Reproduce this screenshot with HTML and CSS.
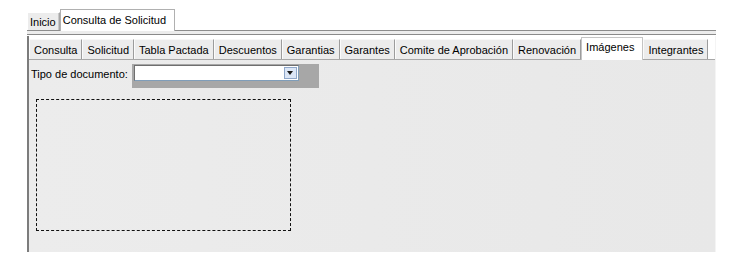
FILE: index.html
```html
<!DOCTYPE html>
<html lang="es">
<head>
    <meta charset="UTF-8">
    <title>Consulta de Solicitud</title>
    <link rel="stylesheet" href="styles.css">
</head>
<body>
    <div class="frame">
        <div class="top-tabs">
            <div class="tab">Inicio</div>
            <div class="tab active">Consulta de Solicitud</div>
        </div>
        <div class="top-rule"></div>

        <div class="panel">
            <div class="sub-tabs">
                <div class="tab">Consulta</div>
                <div class="tab">Solicitud</div>
                <div class="tab">Tabla Pactada</div>
                <div class="tab">Descuentos</div>
                <div class="tab">Garantias</div>
                <div class="tab">Garantes</div>
                <div class="tab">Comite de Aprobación</div>
                <div class="tab">Renovación</div>
                <div class="tab active">Imágenes</div>
                <div class="tab">Integrantes</div>
            </div>

            <div class="content">
                <div class="field-row">
                    <label>Tipo de documento:</label>
                    <div class="combo-wrap">
                        <div class="combo">
                            <span class="combo-btn"><span class="arrow"></span></span>
                        </div>
                    </div>
                </div>
                <div class="image-box"></div>
            </div>
        </div>
    </div>
</body>
</html>
```

FILE: styles.css
```css
body {
    margin: 0;
    background: #ffffff;
    font-family: "Liberation Sans", Arial, sans-serif;
    font-size: 11px;
    color: #000;
}
.frame {
    margin: 0 33px 0 27px;
    padding-top: 9px;
}

/* top tabs */
.top-tabs {
    display: flex;
    align-items: flex-end;
    height: 21px;
    border-bottom: 1px solid #8c8c8c;
}
.top-tabs .tab {
    height: 17px;
    line-height: 18px;
    padding: 0 3px 0 2px;
    background: #ececec;
    border: 1px solid #a5a5a5;
    border-bottom: none;
    border-top-color: #ffffff;
    border-left-color: #ffffff;
    box-shadow: inset -1px 0 #c8c8c8;
}
.top-tabs .tab.active {
    height: 21px;
    width: 108px;
    margin-bottom: -1px;
    background: #ffffff;
    line-height: 20px;
    border: 1px solid #b0b0b0;
    border-bottom: none;
    box-shadow: none;
}
.top-rule {
    height: 3px;
    background: #ececec;
    border-bottom: 1px solid #8a8a8a;
}

/* inner panel */
.panel {
    border-left: 2px solid #7c7c7c;
    border-right: 1px solid #f4f4f4;
    background: #e9e9e9;
    margin-top: 1px;
}
.sub-tabs {
    display: flex;
    align-items: flex-end;
    height: 23px;
    background: #ffffff;
    border-bottom: 1px solid #a8a8a8;
}
.sub-tabs .tab {
    height: 19px;
    line-height: 20px;
    padding: 0 4px;
    background: #ececec;
    border: 1px solid #9c9c9c;
    border-bottom: none;
    border-top-color: #f8f8f8;
    border-left-color: #fbfbfb;
}
.sub-tabs .tab.active {
    height: 22px;
    line-height: 18px;
    margin-bottom: -1px;
    background: #ffffff;
    border-color: #c4c4c4;
    padding: 0 8px 0 4px;
}

.content {
    height: 188px;
    padding: 4px 0 0 2px;
    background: linear-gradient(90deg, #ececec, #e8e8e8);
}
.field-row {
    display: flex;
    align-items: flex-start;
}
.field-row label {
    padding-top: 4px;
    width: 101px;
}
.combo-wrap {
    width: 187px;
    height: 24px;
    background: #a7a7a7;
}
.combo {
    position: relative;
    width: 163px;
    height: 14px;
    margin: 1px 0 0 2px;
    background: #ffffff;
    border: 1px solid #7f9db9;
    border-top-color: #6f6f6f;
    border-left-color: #6f6f6f;
}
.combo-btn {
    position: absolute;
    right: 1px;
    top: 1px;
    width: 11px;
    height: 10px;
    background: #dbe6f6;
    border: 1px solid #8fa7c9;
}
.arrow {
    position: absolute;
    left: 2px;
    top: 3px;
    border-left: 3px solid transparent;
    border-right: 3px solid transparent;
    border-top: 4px solid #1a1a1a;
}
.image-box {
    width: 253px;
    height: 130px;
    margin: 11px 0 0 5px;
    border: 1px dashed #111111;
}
```
